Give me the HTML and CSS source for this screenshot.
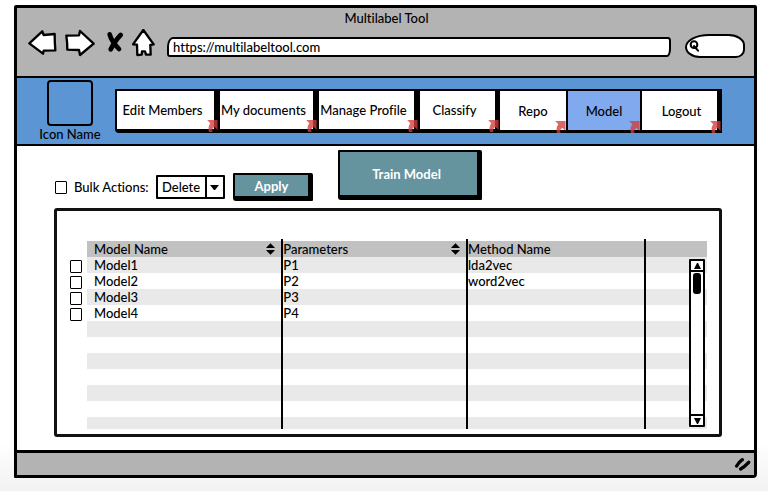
FILE: index.html
```html
<!DOCTYPE html>
<html lang="en">
<head>
<meta charset="utf-8">
<title>Multilabel Tool</title>
<meta name="viewport" content="width=device-width, initial-scale=1">
<link rel="stylesheet" href="styles.css">
</head>
<body>
<svg class="defs" width="0" height="0" aria-hidden="true">
  <symbol id="link-mark" viewBox="0 0 34 38"><path d="M0 0H33V32L24 22Q13 26 17 38H6Q1 22 10 10Z"/></symbol>
  <symbol id="sort" viewBox="0 0 28 36"><path d="M14 0Q18 4 27 13V15H1V13Q10 4 14 0ZM1 21H27V23Q18 32 14 36Q10 32 1 23Z"/></symbol>
</svg>
<div class="window">
  <header class="chrome">
    <h1 class="title">Multilabel Tool</h1>
    <div class="toolbar">
      <div class="tools">
        <button type="button" aria-label="Back"><svg width="29" height="28" viewBox="84 84 87 84"><path class="outline" d="M88 127L127 91L131 102L164 99Q164 125 166 148L131 149L129 158Z"/></svg></button>
        <button type="button" aria-label="Forward"><svg width="30" height="28" viewBox="195 84 90 84"><path class="outline" d="M199 104L237 103L240 90L281 128L240 162L237 147L202 146Q202 125 199 104Z"/></svg></button>
        <button type="button" aria-label="Stop"><svg width="21" height="28" viewBox="309 84 63 84"><path class="cross" d="M329 100Q334 120 357 144M362 102Q346 118 332 145"/></svg></button>
        <button type="button" aria-label="Home"><svg width="23" height="28" viewBox="395 84 69 84"><path class="outline" d="M429 87L460 130L450 132L451 161H437L434 151H425L424 161L411 162L410 131L398 130Z"/></svg></button>
      </div>
      <input class="address" type="text" value="https://multilabeltool.com" aria-label="Address">
      <label class="search">
        <svg width="11" height="12" viewBox="0 0 33 36" aria-hidden="true"><circle cx="15" cy="14" r="10"/><path d="M15 18L27 32"/></svg>
        <input type="search" aria-label="Search">
      </label>
    </div>
  </header>
  <div class="navbar">
    <div class="brand"><div class="brand-icon"></div><span>Icon Name</span></div>
    <nav class="tabs">
      <a class="tab raised" href="#">Edit Members<svg><use href="#link-mark"/></svg></a>
      <a class="tab raised" href="#">My documents<svg><use href="#link-mark"/></svg></a>
      <a class="tab raised" href="#">Manage Profile<svg><use href="#link-mark"/></svg></a>
      <a class="tab raised" href="#">Classify<svg><use href="#link-mark"/></svg></a>
      <a class="tab" href="#">Repo<svg><use href="#link-mark"/></svg></a>
      <a class="tab current" href="#" aria-current="page">Model<svg><use href="#link-mark"/></svg></a>
      <a class="tab last" href="#">Logout<svg><use href="#link-mark"/></svg></a>
    </nav>
  </div>
  <main class="content">
    <div class="actions">
      <div class="bulk">
        <input type="checkbox" id="bulk"><label for="bulk">Bulk Actions:</label>
        <div class="select">
          <select aria-label="Bulk action"><option>Delete</option></select>
          <svg width="19" height="20" viewBox="0 0 19 20" aria-hidden="true"><path class="rule" d="M1 0V20"/><path d="M5 8H14L10 13H9Z"/></svg>
        </div>
      </div>
      <button type="button" class="btn apply">Apply</button>
      <button type="button" class="btn train">Train Model</button>
    </div>
    <section class="panel">
      <table>
        <colgroup><col class="c-pick"><col class="c-name"><col class="c-param"><col class="c-method"><col></colgroup>
        <thead>
          <tr><td class="pick"></td>
            <th scope="col"><div>Model Name<svg><use href="#sort"/></svg></div></th>
            <th scope="col" class="ruled"><div>Parameters<svg><use href="#sort"/></svg></div></th>
            <th scope="col" class="ruled">Method Name</th>
            <th class="ruled"></th></tr>
        </thead>
        <tbody>
          <tr><td class="pick"><input type="checkbox" aria-label="Model1"></td><td>Model1</td><td>P1</td><td>lda2vec</td><td></td></tr>
          <tr><td class="pick"><input type="checkbox" aria-label="Model2"></td><td>Model2</td><td>P2</td><td>word2vec</td><td></td></tr>
          <tr><td class="pick"><input type="checkbox" aria-label="Model3"></td><td>Model3</td><td>P3</td><td></td><td></td></tr>
          <tr><td class="pick"><input type="checkbox" aria-label="Model4"></td><td>Model4</td><td>P4</td><td></td><td></td></tr>
          <tr><td class="pick"></td><td></td><td></td><td></td><td></td></tr>
          <tr><td class="pick"></td><td></td><td></td><td></td><td></td></tr>
          <tr><td class="pick"></td><td></td><td></td><td></td><td></td></tr>
          <tr><td class="pick"></td><td></td><td></td><td></td><td></td></tr>
          <tr><td class="pick"></td><td></td><td></td><td></td><td></td></tr>
          <tr><td class="pick"></td><td></td><td></td><td></td><td></td></tr>
          <tr class="cut"><td class="pick"></td><td></td><td></td><td></td><td></td></tr>
        </tbody>
      </table>
      <div class="scrollbar">
        <button type="button" aria-label="Scroll up"><svg width="9" height="6" viewBox="0 0 9 6"><path d="M4 0H5L8 6H1Z"/></svg></button>
        <div class="track"><div class="thumb"></div></div>
        <button type="button" aria-label="Scroll down"><svg width="9" height="6" viewBox="0 0 9 6"><path d="M4 6H5L8 0H1Z"/></svg></button>
      </div>
    </section>
  </main>
  <footer class="status">
    <svg width="18" height="14" viewBox="0 0 54 42" aria-hidden="true"><path d="M8 27Q14 16 25 8M20 36Q32 29 44 16"/></svg>
  </footer>
</div>
</body>
</html>
```
FILE: styles.css
```css
* { box-sizing: border-box; }

body {
  margin: 0;
  min-height: 100vh;
  display: flex;
  padding: 5px 11px 13px 14px;
  background: linear-gradient(to top, #f2f2f2, #fff 48px);
  color: #000;
  font: 500 13px/16px Lato, "Liberation Sans", sans-serif;
  font-variant-ligatures: none;
}

button, input, select { font: inherit; color: inherit; }

.defs { position: absolute; }

.window {
  flex: 1;
  display: flex;
  flex-direction: column;
  border: 3px solid #000;
  border-radius: 2px 2px 4px 1px;
  background: #fff;
}

.chrome {
  padding: 2px 9px 18px 11px;
  background: #b3b3b3;
  border-bottom: 2px solid #000;
}

.title {
  margin: 0;
  font: inherit;
  text-align: center;
}

.toolbar {
  display: flex;
  align-items: center;
  gap: 12px;
  padding-top: 1px;
}

.tools {
  display: flex;
  gap: 8px;
}

.tools button {
  padding: 0;
  border: 0;
  background: none;
}

.tools svg { display: block; }

.outline {
  fill: #fff;
  stroke: #000;
  stroke-width: 7;
  stroke-linejoin: round;
}

.cross {
  fill: none;
  stroke: #000;
  stroke-width: 14;
  stroke-linecap: round;
}

.address {
  flex: 1;
  min-width: 0;
  height: 20px;
  margin: 8px 2px 0 0;
  padding: 0 4px;
  border: 2px solid #000;
  border-radius: 6px 3px 4px 3px / 10px 4px 8px 3px;
  background: #fff;
}

.search {
  width: 60px;
  height: 24px;
  margin-top: 7px;
  display: flex;
  align-items: center;
  padding: 0 2px;
  border: 2px solid #000;
  border-radius: 26px 18px 10px 16px / 14px 12px 9px 12px;
  background: #fff;
}

.search input {
  flex: 1;
  min-width: 0;
  padding: 0;
  border: 0;
  outline: 0;
  background: none;
}

.search svg {
  fill: none;
  stroke: #000;
  stroke-width: 6;
  stroke-linecap: round;
}

.navbar {
  display: flex;
  align-items: center;
  gap: 13px;
  padding: 2px 32px 2px 21px;
  background: #5b95d3;
  border-bottom: 2px solid #000;
}

.brand {
  width: 64px;
  display: flex;
  flex-direction: column;
  align-items: center;
  white-space: nowrap;
}

.brand-icon {
  width: 46px;
  height: 46px;
  border: 2px solid #000;
  border-radius: 4px;
}

.tabs {
  flex: 1;
  display: grid;
  grid-template-columns: 103fr 99fr 101fr 81fr 68fr 74fr 81fr;
}

.tab {
  position: relative;
  height: 44px;
  display: flex;
  align-items: center;
  justify-content: center;
  border: solid #000;
  border-width: 2px 1px 3px;
  background: #fff;
  color: #000;
  text-decoration: none;
  white-space: nowrap;
}

.tab.raised {
  padding-right: 6px;
  border-width: 2px 4px 4px 2px;
}

.tab.last {
  padding-left: 4px;
  border-right-width: 5px;
}

.tab.current { background: #81a9ed; }

.tab:first-child { border-radius: 1px 0 0 4px; }

.tab svg {
  position: absolute;
  right: -4px;
  bottom: -3px;
  width: 11px;
  height: 12px;
  fill: rgba(210, 60, 60, 0.78);
}

.tab:not(.raised):not(.last) svg { right: 0; }

.content {
  flex: 1;
  padding: 4px 32px 13px 37px;
}

.actions {
  display: flex;
  align-items: flex-end;
}

.bulk {
  display: flex;
  align-items: center;
  padding: 0 8px 2px 1px;
}

input[type="checkbox"] {
  appearance: none;
  width: 12px;
  height: 13px;
  margin: 0;
  border: 1px solid #000;
  border-radius: 1px;
  background: #fff;
}

.bulk label { width: 82px; margin-left: 7px; white-space: nowrap; }

.select { position: relative; }

.select select {
  appearance: none;
  display: block;
  width: 69px;
  height: 24px;
  padding: 0 20px 0 4px;
  border: 2px solid #000;
  border-radius: 1px;
  background: #fff;
}

.select svg {
  position: absolute;
  top: 2px;
  right: 1px;
  pointer-events: none;
}

.select .rule { stroke: #000; stroke-width: 2; }

.btn {
  padding: 0;
  border: 2px solid #000;
  border-width: 2px 5px 5px 2px;
  border-radius: 1px 2px 1px 3px;
  background: #65939e;
  color: #fff;
  font-weight: 700;
}

.apply { width: 80px; height: 28px; margin-right: 25px; }

.train { width: 144px; height: 50px; margin-bottom: 1px; padding-right: 4px; }

.panel {
  position: relative;
  margin-top: 7px;
  padding: 30px 12px 5px 13px;
  border: 3px solid #111;
  border-radius: 3px;
}

table {
  width: 100%;
  table-layout: fixed;
  border-collapse: separate;
  border-spacing: 0;
}

.c-pick { width: 17px; }
.c-name { width: 30.5%; }
.c-param { width: 29%; }
.c-method { width: 28%; }

th, td {
  height: 16px;
  padding: 0;
  font-weight: inherit;
  line-height: 16px;
  text-align: left;
  vertical-align: top;
}

th { background: #c1c1c1; }

th:nth-child(2), td:nth-child(2) { padding-left: 7px; }

tbody tr:nth-child(odd) td:not(.pick) { background: #e9e9e9; }

.ruled, tbody td:nth-child(n+3) { border-left: 2px solid #000; }

.ruled { position: relative; }

.ruled::before {
  content: "";
  position: absolute;
  top: -2px;
  left: -2px;
  width: 2px;
  height: 2px;
  background: #000;
}

th div {
  display: flex;
  align-items: center;
  justify-content: space-between;
  padding-right: 6px;
}

th svg { width: 9px; height: 12px; }

.cut td { height: 12px; }

.pick input { display: block; margin-top: 3px; }

.scrollbar {
  position: absolute;
  top: 48px;
  right: 14px;
  bottom: 7px;
  width: 16px;
  display: flex;
  flex-direction: column;
  border: 2px solid #000;
  border-radius: 1px;
  background: #fff;
}

.scrollbar button {
  height: 9px;
  padding: 0;
  display: flex;
  align-items: center;
  justify-content: center;
  border: 0;
  background: none;
}

.track {
  flex: 1;
  padding: 1px 2px;
  border: solid #000;
  border-width: 2px 0;
}

.thumb {
  height: 21px;
  border-radius: 3px;
  background: #000;
}

.status {
  height: 25px;
  display: flex;
  align-items: center;
  justify-content: flex-end;
  padding-right: 2px;
  border-top: 3px solid #000;
  background: #b3b3b3;
}

.status path {
  fill: none;
  stroke: #000;
  stroke-width: 10;
  stroke-linecap: round;
}
```
